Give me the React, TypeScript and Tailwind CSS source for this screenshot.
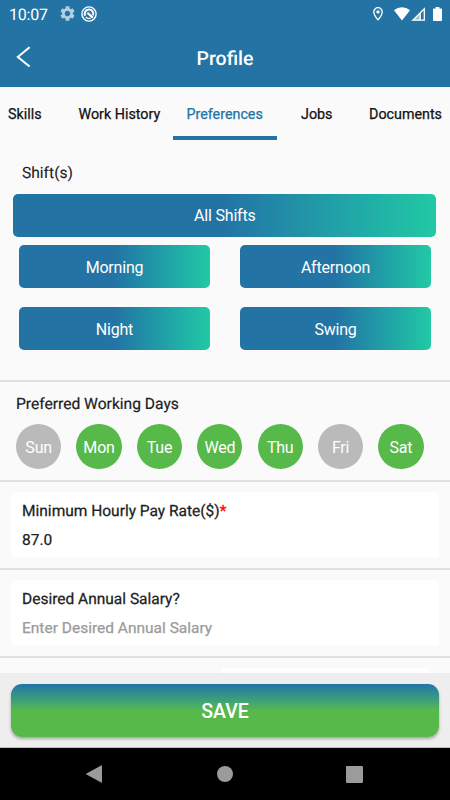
import { useState } from 'react';
import clsx from 'clsx';

const TABS = [
  { name: 'Skills', className: 'w-[60px] pl-2' },
  { name: 'Work History', className: 'w-[113px] pl-[18.5px]' },
  { name: 'Preferences', className: 'w-[104px] pl-[13.5px]' },
  { name: 'Jobs', className: 'w-[78px] pl-6' },
  { name: 'Documents', className: 'w-[95px] pl-[14px]' },
];

const SHIFTS = ['Morning', 'Afternoon', 'Night', 'Swing'];
const DAYS = ['Sun', 'Mon', 'Tue', 'Wed', 'Thu', 'Fri', 'Sat'];

function StatusBar() {
  return (
    <div className="flex h-[27px] items-center pl-[9px] pr-[8px] text-white">
      <span className="pt-[3px] text-[16px] leading-none tracking-[-0.2px]">10:07</span>
      <svg className="ml-[12px] h-[15px] w-[15px] opacity-65" viewBox="2 2 20 20" fill="currentColor">
        <path d="M19.14 12.94c.04-.3.06-.61.06-.94 0-.32-.02-.64-.07-.94l2.03-1.58a.49.49 0 0 0 .12-.61l-1.92-3.32a.488.488 0 0 0-.59-.22l-2.39.96c-.5-.38-1.03-.7-1.62-.94l-.36-2.54a.484.484 0 0 0-.48-.41h-3.84c-.24 0-.43.17-.47.41l-.36 2.54c-.59.24-1.13.57-1.62.94l-2.39-.96c-.22-.08-.47 0-.59.22L2.74 8.87c-.12.21-.08.47.12.61l2.03 1.58c-.05.3-.09.63-.09.94s.02.64.07.94l-2.03 1.58a.49.49 0 0 0-.12.61l1.92 3.32c.12.22.37.29.59.22l2.39-.96c.5.38 1.03.7 1.62.94l.36 2.54c.05.24.24.41.48.41h3.84c.24 0 .44-.17.47-.41l.36-2.54c.59-.24 1.13-.56 1.62-.94l2.39.96c.22.08.47 0 .59-.22l1.92-3.32a.49.49 0 0 0-.12-.61l-2.01-1.58zM12 15.6A3.61 3.61 0 0 1 8.4 12c0-1.98 1.62-3.6 3.6-3.6s3.6 1.62 3.6 3.6-1.62 3.6-3.6 3.6z" />
      </svg>
      <svg className="ml-[6px] h-4 w-4" viewBox="0 0 16 16" fill="none" stroke="currentColor">
        <circle cx="8" cy="8" r="7.1" strokeWidth="1.4" />
        <path d="M4.2 9.8A4.3 4.3 0 1 1 12 9.4" strokeWidth="2" />
        <path d="M6.4 6.8l5.4 4.8" strokeWidth="2.2" />
        <path d="M4.8 11a4.3 4.3 0 0 0 5 1" strokeWidth="1.2" />
      </svg>

      <svg className="ml-auto h-[14px] w-[10px]" viewBox="0 0 10 14" fill="none" stroke="currentColor">
        <path d="M5 .7A4.2 4.2 0 0 0 .8 4.9C.8 7.9 5 12.8 5 12.8s4.2-4.9 4.2-7.9A4.2 4.2 0 0 0 5 .7z" strokeWidth="1.3" />
        <circle cx="5" cy="4.9" r="1.7" fill="currentColor" stroke="none" />
      </svg>
      <svg className="ml-[11px] h-[14px] w-[16px]" viewBox="0 0 16 14" fill="currentColor">
        <path d="M0 3.2a12.5 12.5 0 0 1 16 0L8 13.4z" />
      </svg>
      <svg className="ml-[1px] h-[14px] w-[15px]" viewBox="0 0 15 14">
        <path d="M9 6v7.3H1.6z" fill="currentColor" opacity=".55" />
        <path d="M1.8 13.2L13.3 1.7v11.5z" fill="none" stroke="currentColor" strokeWidth="1.3" />
        <path d="M9.2 6v7" stroke="currentColor" strokeWidth="1.3" />
      </svg>
      <svg className="ml-[7px] h-[14px] w-[9px]" viewBox="0 0 9 14" fill="currentColor">
        <path d="M2.6 0h3.8v1.4h1.8a.8.8 0 0 1 .8.8v11a.8.8 0 0 1-.8.8H.8a.8.8 0 0 1-.8-.8v-11a.8.8 0 0 1 .8-.8h1.8z" />
      </svg>
    </div>
  );
}

function Header() {
  return (
    <header className="h-[87px] shrink-0 bg-[#2374a5]">
      <StatusBar />
      <div className="grid h-[60px] grid-cols-3 items-center">
        <svg className="ml-4 h-[22px] w-4" viewBox="0 0 16 22" fill="none" stroke="white" strokeWidth="2">
          <path d="M13.6 1.3L1.8 11l11.8 9.5" />
        </svg>
        <h1 className="pt-[3px] text-center text-[19.5px] font-medium text-white">Profile</h1>
      </div>
    </header>
  );
}

interface ShiftButtonProps {
  label: string;
  className?: string;
}

function ShiftButton({ label, className = '' }: ShiftButtonProps) {
  return (
    <button
      className={`h-[42.7px] rounded-[5px] bg-linear-to-r from-[#2374a5] from-50% to-[#22c9a5] pt-[2px] text-[16px] tracking-[-0.2px] text-white ${className}`}
    >
      {label}
    </button>
  );
}

interface FieldProps {
  label: string;
  value?: string;
  placeholder?: string;
  required?: boolean;
}

function Field({ label, value, placeholder, required }: FieldProps) {
  return (
    <div className="h-[88px] border-b-2 border-[#e0e0e0] px-[11px] pt-[10px]">
      <div className="h-[65.5px] rounded-[5px] bg-white px-[11px] pt-[8px]">
        <label className="block text-[15.5px] leading-[22px] text-[#212121] [-webkit-text-stroke:0.25px]">
          {label}
          {required && <span className="text-[#ff0000]">*</span>}
        </label>
        <input
          defaultValue={value}
          placeholder={placeholder}
          className="mt-[7px] block h-[22px] w-full text-[15.5px] leading-[22px] text-[#212121] outline-none [-webkit-text-stroke:0.25px] placeholder:text-[#9b9b9b]"
        />
      </div>
    </div>
  );
}

export default function App() {
  const [activeTab, setActiveTab] = useState('Preferences');
  const [days, setDays] = useState(['Mon', 'Tue', 'Wed', 'Thu', 'Sat']);

  const toggleDay = (day: string) => {
    setDays(days.includes(day) ? days.filter((d) => d !== day) : [...days, day]);
  };

  return (
    <div className="flex h-[800px] w-[450px] flex-col overflow-hidden bg-[#fafafa] font-['Roboto',sans-serif] [text-rendering:geometricPrecision]">
      <Header />

      <nav className="flex h-[53px] shrink-0">
        {TABS.map((tab) => (
          <button
            key={tab.name}
            onClick={() => setActiveTab(tab.name)}
            className={clsx(
              'whitespace-nowrap border-b-[4.5px] pt-[6px] text-left text-[14.3px] [-webkit-text-stroke:0.25px]',
              tab.className,
              activeTab === tab.name ? 'border-[#2374a5] text-[#2374a5]' : 'border-transparent text-[#111111]'
            )}
          >
            {tab.name}
          </button>
        ))}
      </nav>

      <main className="min-h-0 flex-1 overflow-hidden">
        {/* Shifts */}
        <section className="h-[242px] border-b-2 border-[#e0e0e0] pl-[13.3px] pr-[13.7px] pt-[22px]">
          <h2 className="pl-[8.7px] text-[15.6px] leading-[22px] text-[#212121] [-webkit-text-stroke:0.1px]">Shift(s)</h2>
          <ShiftButton label="All Shifts" className="mt-[10px] w-full" />
          <div className="mt-[8.8px] grid grid-cols-2 gap-x-[30px] gap-y-[19.3px] pl-[5.7px] pr-[5.3px]">
            {SHIFTS.map((shift) => (
              <ShiftButton key={shift} label={shift} />
            ))}
          </div>
        </section>

        {/* Working days */}
        <section className="h-[100px] border-b-2 border-[#e0e0e0] pl-4 pt-[11px]">
          <h2 className="text-[15.6px] leading-[22px] text-[#212121] [-webkit-text-stroke:0.2px]">Preferred Working Days</h2>
          <div className="mt-[9px] flex gap-[15.1px]">
            {DAYS.map((day) => (
              <button
                key={day}
                onClick={() => toggleDay(day)}
                className={clsx(
                  'h-[45.3px] w-[45.3px] rounded-full pt-[2px] text-[16px] tracking-[-0.2px] text-white',
                  days.includes(day) ? 'bg-[#56b94a]' : 'bg-[#bababa]'
                )}
              >
                {day}
              </button>
            ))}
          </div>
        </section>

        <Field label="Minimum Hourly Pay Rate($)" value="87.0" required />
        <Field label="Desired Annual Salary?" placeholder="Enter Desired Annual Salary" />
        <div className="ml-[222px] mt-[10px] h-10 w-[206px] bg-white" />
      </main>

      <footer className="h-[75px] shrink-0 border-b border-[#bdbdbd] bg-[#eeeeee] px-[11px] pt-[11px]">
        <button className="h-[52.5px] w-full rounded-[11px] bg-linear-to-b from-[#2374a5] to-[#56b94a] to-50% pt-[3px] text-[19.5px] font-medium text-white shadow-[0_2px_3px_rgba(0,0,0,0.3)]">
          SAVE
        </button>
      </footer>

      <div className="flex h-[52px] shrink-0 items-center bg-black pl-[86px] text-[#9b9b9b]">
        <svg className="h-[18px] w-4" viewBox="0 0 16 18" fill="currentColor">
          <path d="M15.2 0.4q.8-.4.8.5v16.2q0 .9-.8.5L.5 9.6q-.9-.6 0-1.2z" />
        </svg>
        <div className="ml-[115px] h-4 w-4 rounded-full bg-[#9b9b9b]" />
        <div className="ml-[113px] h-[17px] w-[17px] rounded-[1px] bg-[#9b9b9b]" />
      </div>
    </div>
  );
}
